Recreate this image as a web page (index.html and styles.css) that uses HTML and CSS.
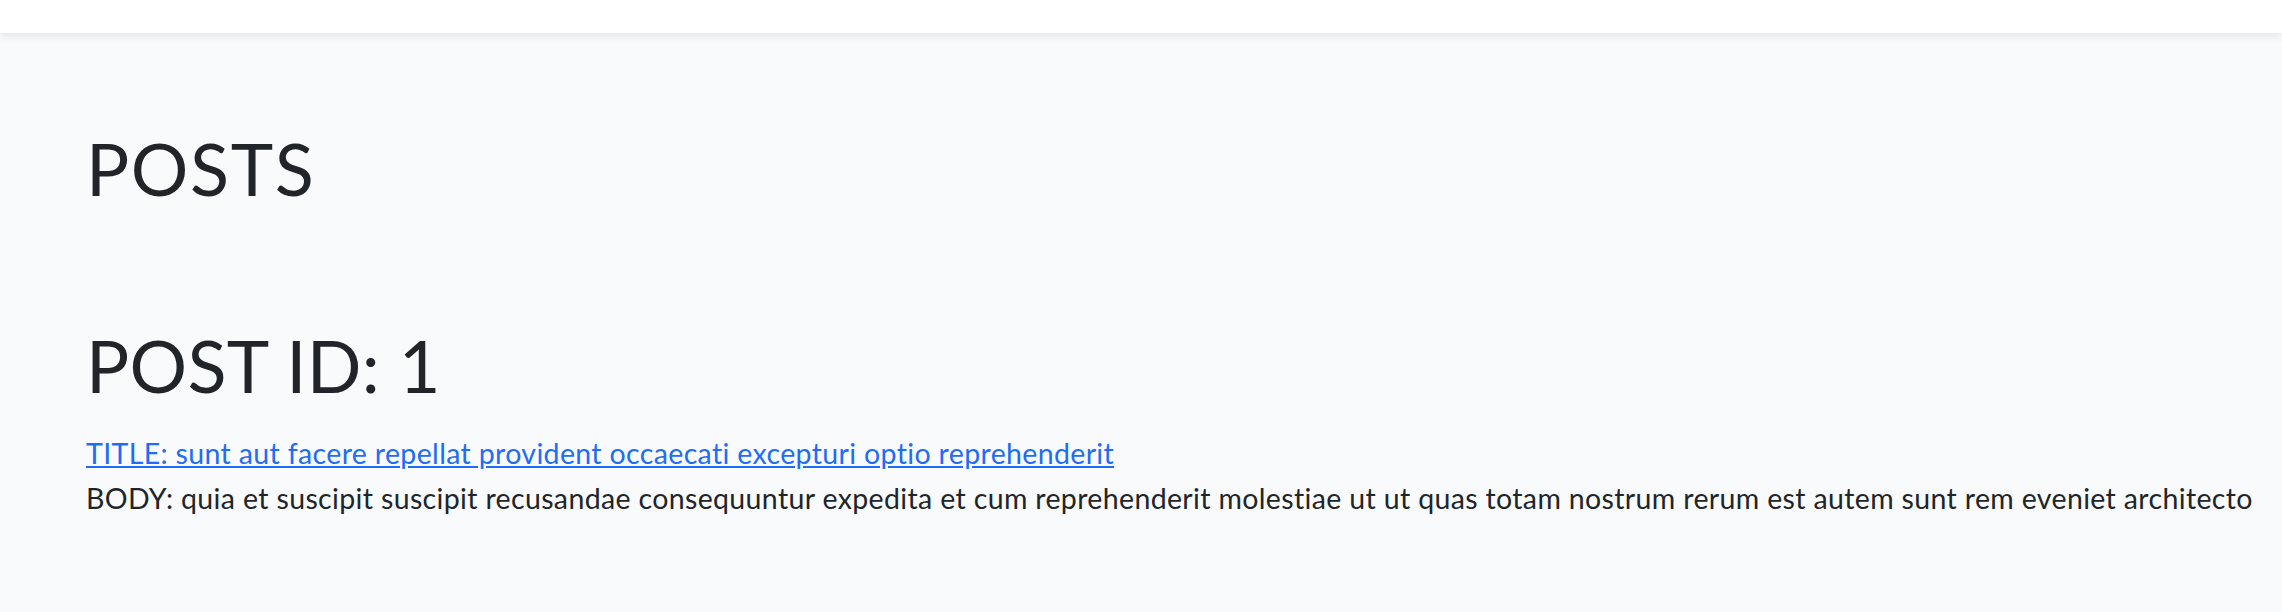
FILE: index.html
```html
<!DOCTYPE html>
<html lang="en">
<head>
<meta charset="utf-8">
<title>Posts</title>
<link rel="stylesheet" href="styles.css">
</head>
<body>
<nav class="navbar"></nav>
<main class="content">
  <h1 class="page-title">POSTS</h1>
  <section class="post">
    <h1 class="post-id">POST ID: 1</h1>
    <div class="post-title"><a href="#">TITLE: sunt aut facere repellat provident occaecati excepturi optio reprehenderit</a></div>
    <div class="post-body">BODY: quia et suscipit suscipit recusandae consequuntur expedita et cum reprehenderit molestiae ut ut quas totam nostrum rerum est autem sunt rem eveniet architecto</div>
  </section>
</main>
</body>
</html>
```

FILE: styles.css
```css
html, body {
  margin: 0;
  padding: 0;
}

body {
  background: #f8fafc;
  color: #212529;
  font-family: Lato, "Noto Sans", sans-serif;
  font-size: 28.5px;
  line-height: 45.6px;
  letter-spacing: 0.35px;
  font-variant-ligatures: none;
  overflow: hidden;
}

.navbar {
  height: 33px;
  background: #ffffff;
  box-shadow: 0 4px 8px rgba(0, 0, 0, 0.075);
  position: relative;
  z-index: 1;
}

.content {
  padding: 92px 0 0 86px;
}

.page-title,
.post-id {
  margin: 0;
  font-size: 72px;
  font-weight: 400;
  line-height: 86.4px;
}

.page-title {
  letter-spacing: 1.6px;
}

.post-id {
  letter-spacing: 0.3px;
  margin-bottom: 22px;
}

.post {
  margin-top: 111px;
}

.post-title a {
  color: #1f6cf6;
  text-decoration: underline;
}

.post-body {
  white-space: nowrap;
}
```
